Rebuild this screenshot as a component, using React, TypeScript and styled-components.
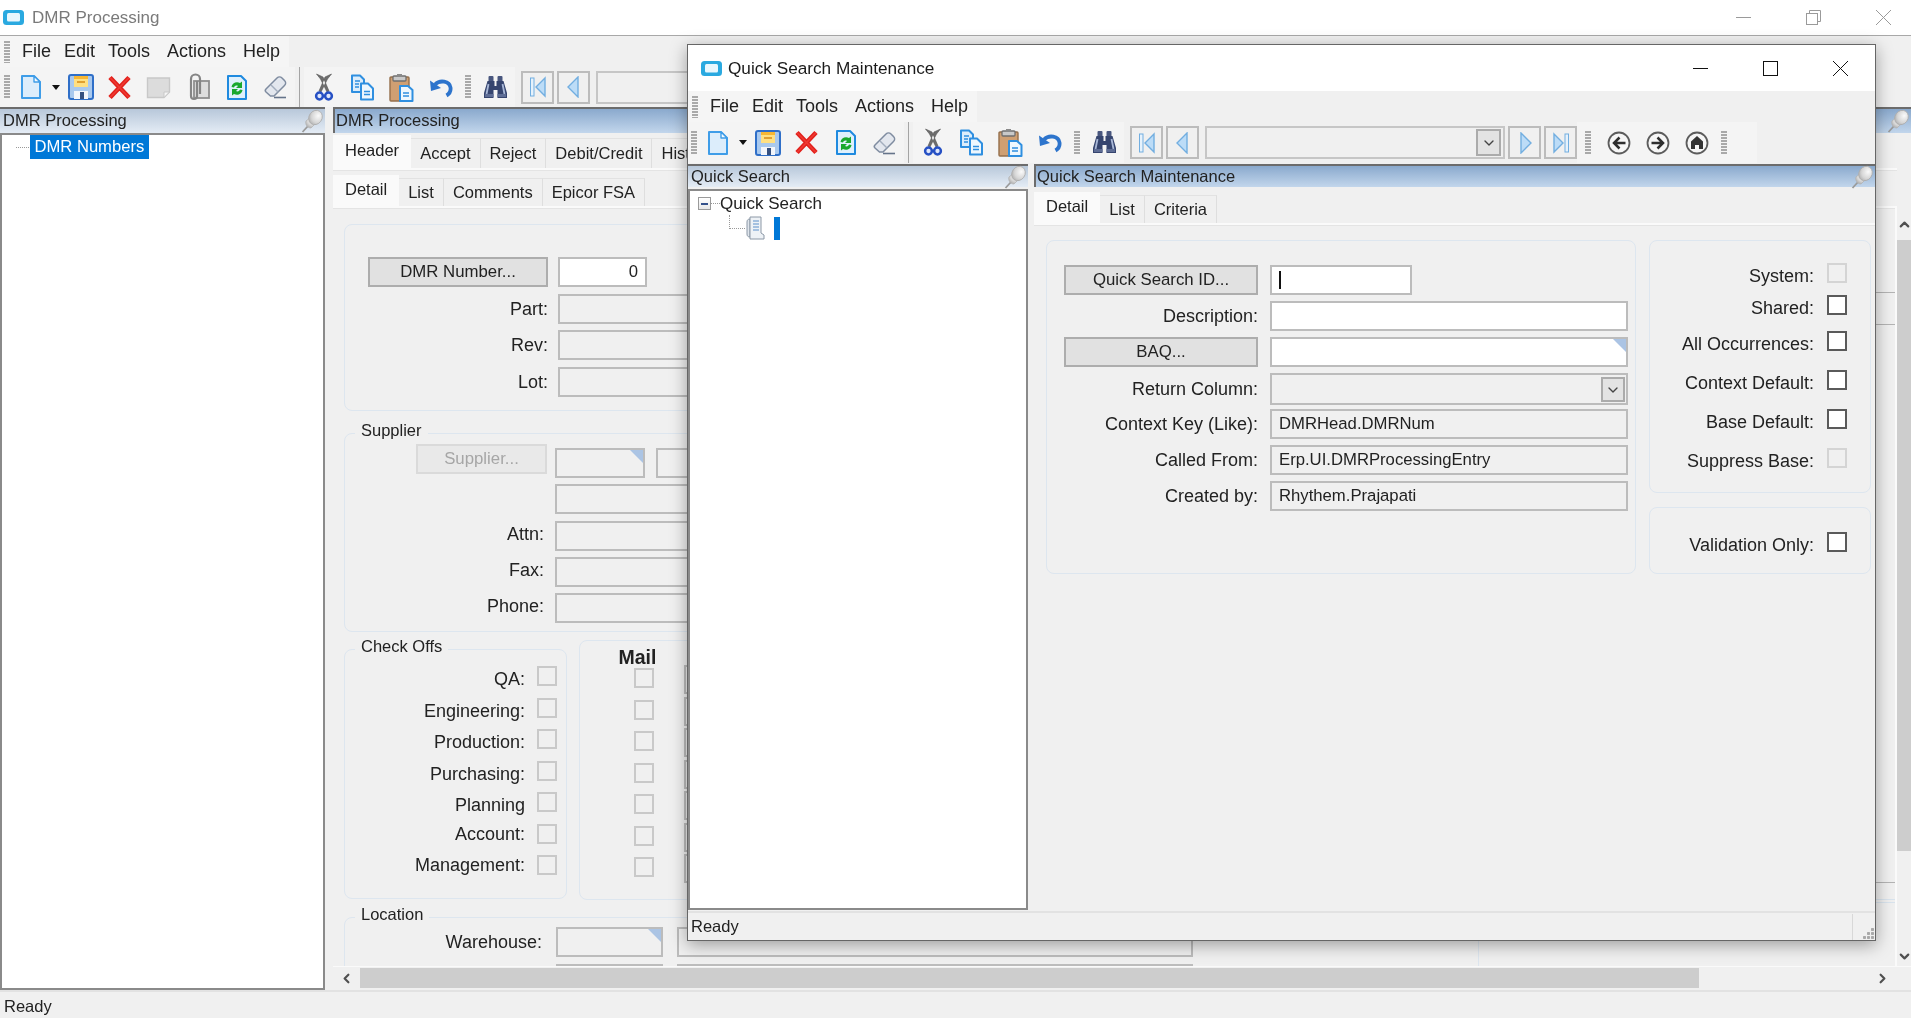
import React from 'react';
import styled, { createGlobalStyle } from 'styled-components';
import { ChevronDown, ChevronLeft, ChevronRight, ChevronUp } from 'lucide-react';

const GlobalStyle = createGlobalStyle`
  html, body {
    margin: 0;
    padding: 0;
    background: #f0f0f0;
    overflow: hidden;
  }
  * {
    box-sizing: border-box;
  }
  body {
    font-family: "Liberation Sans", Arial, sans-serif;
    color: #222;
  }
`;

/* ---------- drawings ---------- */

const AppIcon = () => (
  <svg width="21" height="15" viewBox="0 0 21 15">
    <rect x="0" y="0" width="21" height="15" rx="3.5" fill="#2aa9e0" />
    <rect x="4" y="3" width="13" height="8.5" rx="1.5" fill="#e9f7fd" />
  </svg>
);

const NewIcon = () => (
  <svg width="22" height="26" viewBox="0 0 22 26">
    <path d="M2 2h12l6 6v16H2z" fill="#dcedfb" stroke="#3f9de8" strokeWidth="2" strokeLinejoin="round" />
    <path d="M14 2v6h6z" fill="#f6fbff" stroke="#3f9de8" strokeWidth="1.400" strokeLinejoin="round" />
  </svg>
);

const SaveIcon = () => (
  <svg width="26" height="26" viewBox="0 0 26 26">
    <rect x="1" y="1" width="24" height="24" rx="2" fill="#a9c9ee" stroke="#2f6fc8" strokeWidth="2" />
    <rect x="6" y="2" width="14" height="11" fill="#ffe082" />
    <rect x="6" y="2" width="14" height="3" fill="#f7b733" />
    <rect x="9" y="7" width="8" height="2" fill="#e0a030" />
    <rect x="6" y="17" width="14" height="8" fill="#f3f6fb" />
    <rect x="12" y="18" width="4" height="7" fill="#35507f" />
  </svg>
);

const DeleteIcon = () => (
  <svg width="25" height="25" viewBox="0 0 25 25">
    <path d="M3 2.500l19 20M22 2.500l-19 20" stroke="#e2211c" strokeWidth="4.600" fill="none" />
    <path d="M3 2.500l19 20M22 2.500l-19 20" stroke="#ee3a33" strokeWidth="1.600" fill="none" />
  </svg>
);

const NoteIcon = () => (
  <svg width="25" height="23" viewBox="0 0 25 23">
    <path d="M1.500 2h22v14l-5.500 5.500H1.500z" fill="#dcdcdc" stroke="#c8c8c8" strokeWidth="1.400" />
    <path d="M23.500 16H18v5.500z" fill="#f6f6f6" stroke="#c8c8c8" />
  </svg>
);

const ClipIcon = () => (
  <svg width="25" height="28" viewBox="0 0 25 28">
    <rect x="9" y="8" width="15" height="17" fill="#dedede" stroke="#8f8f8f" strokeWidth="1.800" />
    <path d="M15 21V6a4.500 4.500 0 0 0-9 0v17a3 3 0 0 0 6 0V8" fill="none" stroke="#858585" strokeWidth="2.200" />
  </svg>
);

const RefreshIcon = () => (
  <svg width="22" height="27" viewBox="0 0 22 27">
    <path d="M2 2h13l5 5v18H2z" fill="#dff0fc" stroke="#1f8adf" strokeWidth="2" strokeLinejoin="round" />
    <path d="M5.500 13c.5-4 5-6 8.500-4l2-1.500V14h-6l2-2c-2-1-3.500 0-4 1.500z" fill="#19a82e" />
    <path d="M16.500 16c-.5 4-5 6-8.500 4l-2 1.500V15h6l-2 2c2 1 3.500 0 4-1.500z" fill="#19a82e" />
  </svg>
);

const EraserIcon = () => (
  <svg width="25" height="24" viewBox="0 0 25 24">
    <path d="M3 14L14 3c1.500-1.500 3.500-1.500 5 0l2.500 2.500c1.500 1.500 1.500 3.500 0 5L11 21H7.500L3 17c-1-1-1-2 0-3z" fill="#e3e7ee" stroke="#7f8ca0" strokeWidth="1.500" />
    <path d="M8 10l7 7" stroke="#a3aebd" strokeWidth="1.400" />
    <path d="M11 22.500h12" stroke="#65748a" strokeWidth="1.600" />
  </svg>
);

const CutIcon = () => (
  <svg width="20" height="29" viewBox="0 0 20 29">
    <path d="M2.500 1l4 5L13 19l2-1L9 4zM17.500 1l-4 5L7 19l-2-1L11 4z" fill="#6d6d6d" stroke="#555" strokeWidth=".6" />
    <circle cx="5.500" cy="23" r="3.400" fill="#dfe7fb" stroke="#2650c4" strokeWidth="2.500" />
    <circle cx="14.500" cy="23" r="3.400" fill="#dfe7fb" stroke="#2650c4" strokeWidth="2.500" />
  </svg>
);

const CopyIcon = () => (
  <svg width="25" height="27" viewBox="0 0 25 27">
    <path d="M2 1.500h8l4 4V18H2z" fill="#dcedfb" stroke="#2f8fe0" strokeWidth="2" strokeLinejoin="round" />
    <path d="M11 9.500h7l5 5V25.500H11z" fill="#eef7fe" stroke="#2f8fe0" strokeWidth="2" strokeLinejoin="round" />
    <path d="M14 17.500h6M14 20.500h6M5 7h5M5 10h4M5 13h4" stroke="#2f8fe0" strokeWidth="1.400" />
  </svg>
);

const PasteIcon = () => (
  <svg width="25" height="29" viewBox="0 0 25 29">
    <rect x="1" y="4" width="19" height="24" rx="1" fill="#cf9f72" stroke="#946f4c" strokeWidth="1.400" />
    <rect x="4" y="3" width="13" height="5" rx="1" fill="#c9c9c9" stroke="#6f6f6f" strokeWidth="1.300" />
    <rect x="8" y="1" width="5" height="3" fill="#8a8a8a" />
    <path d="M11 13h8l4.500 4v11H11z" fill="#eef7fe" stroke="#2f8fe0" strokeWidth="2" strokeLinejoin="round" />
    <path d="M14 20h6M14 23h6" stroke="#2f8fe0" strokeWidth="1.400" />
  </svg>
);

const UndoIcon = () => (
  <svg width="24" height="21" viewBox="0 0 24 21">
    <path d="M6 7.500c5-5 14.500-3.500 15.500 3 .5 3.500-1.500 6.500-4 8" fill="none" stroke="#2d74cc" strokeWidth="3.800" />
    <path d="M1 3.500l1 10.500 10-3z" fill="#2d74cc" />
  </svg>
);

const BinocularsIcon = () => (
  <svg width="25" height="25" viewBox="0 0 25 25">
    <rect x="5.500" y="1" width="5" height="6" rx="1" fill="#48567e" />
    <rect x="14.500" y="1" width="5" height="6" rx="1" fill="#48567e" />
    <path d="M4.500 6h7v5h2V6h7l3.500 12v5h-9.500v-8h-4v8H1v-5z" fill="#36456f" />
    <path d="M5.500 9L3.500 19M19.500 9l2 10" stroke="#a9b8d8" strokeWidth="1.800" />
    <rect x="2" y="19" width="8.500" height="3" fill="#5e6d95" />
    <rect x="14.500" y="19" width="8.500" height="3" fill="#5e6d95" />
  </svg>
);

const TriIcon = ({ dir, bar }: { dir: 'left' | 'right'; bar?: boolean }) => (
  <svg width="20" height="22" viewBox="0 0 20 22">
    <g transform={dir === 'left' ? 'translate(20,0) scale(-1,1)' : undefined}>
      <path d={bar ? 'M3 2l9 9-9 9z' : 'M6 1l10 10-10 10z'} fill="#bcdcf7" stroke="#72aee0" strokeWidth="1.400" />
      {bar && <rect x="14" y="2" width="3.500" height="18" fill="#e6f2fc" stroke="#72aee0" />}
    </g>
  </svg>
);

const CircleArrowIcon = ({ dir }: { dir: 'left' | 'right' }) => (
  <svg width="24" height="24" viewBox="0 0 24 24">
    <circle cx="12" cy="12" r="10.500" fill="#f6f6f6" stroke="#5c5c5c" strokeWidth="1.800" />
    <g transform={dir === 'left' ? 'translate(24,0) scale(-1,1)' : undefined}>
      <path d="M5.500 12h10M11.500 6.500l5.500 5.500-5.500 5.500" fill="none" stroke="#2e2e2e" strokeWidth="2.500" />
    </g>
  </svg>
);

const HomeIcon = () => (
  <svg width="24" height="24" viewBox="0 0 24 24">
    <circle cx="12" cy="12" r="10.500" fill="#f6f6f6" stroke="#5c5c5c" strokeWidth="1.800" />
    <path d="M12 5l6 5.500V18h-4v-4h-4v4H6v-7.500z" fill="#333" />
  </svg>
);

const PinIcon = () => (
  <svg width="23" height="24" viewBox="0 0 23 24">
    <defs>
      <radialGradient id="pinHead" cx="0.6" cy="0.3" r="0.8">
        <stop offset="0" stopColor="#fafafa" />
        <stop offset="0.6" stopColor="#d6d6d6" />
        <stop offset="1" stopColor="#a6a6a6" />
      </radialGradient>
    </defs>
    <path d="M7 17L1.500 23" stroke="#9a9a9a" strokeWidth="1.800" />
    <path d="M5 12c-1 3 1 7 5 7l6-6-5-6z" fill="url(#pinHead)" stroke="#b4b4b4" strokeWidth=".8" />
    <ellipse cx="14.500" cy="8.500" rx="6.500" ry="7.500" transform="rotate(35 14.500 8.500)" fill="url(#pinHead)" stroke="#adadad" strokeWidth=".8" />
  </svg>
);

const BookIcon = () => (
  <svg width="21" height="24" viewBox="0 0 21 24">
    <path d="M2 6c0-2 1-3 3-3v18c-2 0-3-1-3-3z" fill="#dfe5ec" stroke="#8c98a6" />
    <path d="M5 1h11v16l3 2v4H5z" fill="#eef2f6" stroke="#8c98a6" />
    <path d="M8 5h6M8 8h6M8 11h6M8 14h6" stroke="#5d8fc9" strokeWidth="1.200" />
  </svg>
);

const MinLine = () => (
  <svg width="15" height="15" viewBox="0 0 15 15">
    <path d="M0 7.500h15" stroke="currentColor" strokeWidth="1" />
  </svg>
);
const MaxBox = () => (
  <svg width="15" height="15" viewBox="0 0 15 15">
    <rect x="0.500" y="0.500" width="14" height="14" fill="none" stroke="currentColor" />
  </svg>
);
const RestoreBox = () => (
  <svg width="15" height="15" viewBox="0 0 15 15">
    <rect x="0.500" y="3.500" width="11" height="11" fill="none" stroke="currentColor" />
    <path d="M3.500 3.500v-3h11v11h-3" fill="none" stroke="currentColor" />
  </svg>
);
const CloseX = () => (
  <svg width="15" height="15" viewBox="0 0 15 15">
    <path d="M0 0l15 15M15 0L0 15" stroke="currentColor" strokeWidth="1" />
  </svg>
);

/* ---------- window chrome ---------- */

const Page = styled.div`
  width: 1911px;
  height: 1018px;
  position: relative;
  overflow: hidden;
  display: flex;
  flex-direction: column;
  background: #f0f0f0;
  filter: blur(0.3px);
`;

const TitleBar = styled.div<{ $h: number; $dim?: boolean }>`
  height: ${(p) => p.$h}px;
  flex: none;
  display: flex;
  align-items: center;
  background: #fff;
  padding-left: ${(p) => (p.$dim ? 3 : 13)}px;
  color: ${(p) => (p.$dim ? '#7a7a7a' : '#1a1a1a')};
  border-bottom: ${(p) => (p.$dim ? '1px solid #a8a8a8' : 'none')};
`;

const TitleText = styled.span<{ $dim?: boolean }>`
  font-size: ${(p) => (p.$dim ? 17 : 17.2)}px;
  margin-left: ${(p) => (p.$dim ? 8 : 6)}px;
`;

const WinControls = styled.div<{ $dim?: boolean }>`
  margin-left: auto;
  display: flex;
  color: ${(p) => (p.$dim ? '#9a9a9a' : '#111')};
  margin-right: ${(p) => (p.$dim ? -7 : 0)}px;
`;

const WinButton = styled.div`
  width: 70px;
  display: flex;
  justify-content: center;
  align-items: center;
`;

const MenuBar = styled.div`
  height: 31px;
  flex: none;
  display: flex;
  background: #f0f0f0;
`;

const MenuInner = styled.div`
  width: 289px;
  display: flex;
  align-items: center;
  background: #f5f5f5;
  padding-left: 4px;
`;

const Grip = styled.div<{ $h?: number }>`
  width: 6px;
  height: ${(p) => p.$h ?? 24}px;
  flex: none;
  background: repeating-linear-gradient(#a9a9a9 0 2px, transparent 2px 3px);
`;

const MenuItem = styled.span<{ $mr: number }>`
  font-size: 18px;
  margin-right: ${(p) => p.$mr}px;
  &:first-of-type {
    margin-left: 12px;
  }
`;

const ToolBar = styled.div<{ $h: number }>`
  height: ${(p) => p.$h}px;
  flex: none;
  display: flex;
  align-items: center;
  overflow: hidden;
`;

const Band = styled.div<{ $pad?: number }>`
  height: 100%;
  flex: none;
  display: flex;
  align-items: center;
  background: #f4f4f4;
  padding-left: ${(p) => p.$pad ?? 0}px;
`;

const ToolSlot = styled.div<{ $w?: number }>`
  width: ${(p) => p.$w ?? 39}px;
  height: 100%;
  flex: none;
  display: flex;
  align-items: center;
  justify-content: center;
`;

const ToolSep = styled.div`
  width: 1px;
  height: 100%;
  flex: none;
  background: #a4a4a4;
  margin: 0 4px;
`;

const DropArrow = styled.span`
  width: 0;
  height: 0;
  border-left: 4px solid transparent;
  border-right: 4px solid transparent;
  border-top: 5px solid #111;
`;

const NavButton = styled.div<{ $ml?: number }>`
  width: 33px;
  height: 33px;
  flex: none;
  margin-left: ${(p) => p.$ml ?? 3}px;
  border: 2px solid #bcbcbc;
  display: flex;
  align-items: center;
  justify-content: center;
`;

const NavCombo = styled.div`
  width: 300px;
  height: 33px;
  flex: none;
  margin-left: 6px;
  border: 2px solid #c6c6c6;
  display: flex;
  align-items: center;
  justify-content: flex-end;
  padding-right: 2px;
`;

const DropButton = styled.div`
  width: 25px;
  height: 27px;
  background: #e3e3e3;
  border: 2px solid #ababab;
  color: #444;
  display: flex;
  align-items: center;
  justify-content: center;
`;

const StatusBar = styled.div<{ $h: number; $pad: number; $low?: boolean }>`
  height: ${(p) => p.$h}px;
  flex: none;
  display: flex;
  align-items: center;
  font-size: 16.5px;
  padding-left: ${(p) => p.$pad}px;
  padding-top: ${(p) => (p.$low ? 2 : 0)}px;
  border-top: 2px solid #e2e2e2;
  background: #f0f0f0;
`;

const StatusSep = styled.div`
  width: 1px;
  height: 26px;
  background: #d8d8d8;
  margin-left: auto;
`;

const ResizeGrip = styled.div`
  width: 22px;
  height: 100%;
  align-self: flex-end;
  background: radial-gradient(circle at 1.500px 1.500px, #a9a9a9 1.400px, transparent 1.500px) right bottom / 4px 4px no-repeat,
    radial-gradient(circle at 1.500px 1.500px, #a9a9a9 1.400px, transparent 1.500px) right 4px bottom / 4px 4px no-repeat,
    radial-gradient(circle at 1.500px 1.500px, #a9a9a9 1.400px, transparent 1.500px) right 8px bottom / 4px 4px no-repeat,
    radial-gradient(circle at 1.500px 1.500px, #a9a9a9 1.400px, transparent 1.500px) right bottom 4px / 4px 4px no-repeat,
    radial-gradient(circle at 1.500px 1.500px, #a9a9a9 1.400px, transparent 1.500px) right 4px bottom 4px / 4px 4px no-repeat,
    radial-gradient(circle at 1.500px 1.500px, #a9a9a9 1.400px, transparent 1.500px) right bottom 8px / 4px 4px no-repeat;
`;

/* ---------- panels and tabs ---------- */

const PanelHeader = styled.div<{ $active?: boolean; $h: number }>`
  height: ${(p) => p.$h}px;
  flex: none;
  display: flex;
  align-items: center;
  justify-content: space-between;
  padding: 0 1px 0 ${(p) => (p.$active ? 1 : 3)}px;
  font-size: 16.5px;
  line-height: 20px;
  white-space: nowrap;
  border-top: 2px solid #6c6c6c;
  border-left: ${(p) => (p.$active ? '2px solid #6c6c6c' : 'none')};
  background: ${(p) =>
    p.$active ? 'linear-gradient(#8aa9cd, #c2d6ec)' : 'linear-gradient(#b8c8da, #e4ecf5)'};
`;

const HeaderText = styled.span`
  margin-top: -2px;
`;

const TreeBox = styled.div`
  flex: 1;
  background: #fff;
  border: 2px solid #8a8a8a;
`;

const TreeRow = styled.div<{ $pl: number; $h: number }>`
  height: ${(p) => p.$h}px;
  display: flex;
  align-items: center;
  padding-left: ${(p) => p.$pl}px;
  font-size: 17px;
`;

const Dots = styled.span<{ $w: number }>`
  width: ${(p) => p.$w}px;
  border-top: 1px dotted #999;
`;

const TreeSelection = styled.span`
  background: #0078d7;
  color: #fff;
  font-size: 16.6px;
  padding: 0 4.500px;
  height: 24px;
  line-height: 23px;
  margin-left: 1px;
`;

const Expander = styled.span`
  width: 13px;
  height: 13px;
  border: 1.500px solid #9a9a9a;
  background: linear-gradient(#fff, #e6e6e6);
  display: flex;
  align-items: center;
  justify-content: center;
  &::before {
    content: '';
    width: 7px;
    height: 2px;
    background: #33508a;
  }
`;

const Elbow = styled.span`
  width: 16px;
  height: 14px;
  margin-top: -12px;
  border-left: 1px dotted #999;
  border-bottom: 1px dotted #999;
`;

const BlueSliver = styled.span`
  width: 6px;
  height: 23px;
  background: #0078d7;
  margin-left: 8px;
`;

const TabRow = styled.div<{ $mt: number; $h: number }>`
  height: ${(p) => p.$h}px;
  margin-top: ${(p) => p.$mt}px;
  flex: none;
  display: flex;
  align-items: flex-end;
  border-bottom: 2px solid #fafafa;
  box-shadow: 0 1px 0 #e4e4e4;
`;

const Tab = styled.div<{ $active?: boolean; $h: number }>`
  height: ${(p) => (p.$active ? p.$h : p.$h - 5)}px;
  padding: 0 ${(p) => (p.$active ? 12 : 9)}px ${(p) => (p.$active ? 4 : 0)}px;
  display: flex;
  align-items: center;
  font-size: 16.5px;
  white-space: nowrap;
  flex: none;
  background: ${(p) => (p.$active ? '#fafafa' : '#f0f0f0')};
  border-top: ${(p) => (p.$active ? 'none' : '1px solid #e2e2e2')};
  border-right: ${(p) => (p.$active ? 'none' : '1px solid #dedede')};
  position: relative;
  margin-bottom: ${(p) => (p.$active ? -2 : 0)}px;
`;

/* ---------- forms ---------- */

const Group = styled.div<{ $w?: number; $h?: number; $mt?: number }>`
  position: relative;
  flex: none;
  width: ${(p) => (p.$w ? `${p.$w}px` : 'auto')};
  height: ${(p) => (p.$h ? `${p.$h}px` : 'auto')};
  margin-top: ${(p) => p.$mt ?? 0}px;
  border: 1.500px solid #dde6ef;
  border-radius: 8px;
`;

const Legend = styled.span`
  position: absolute;
  left: 10px;
  top: -14px;
  padding: 0 6px;
  background: #f0f0f0;
  font-size: 16.5px;
  line-height: 20px;
`;

const FormGrid = styled.div<{ $cols: string; $gap: number; $rowH: number; $pt: number; $pl: number }>`
  display: grid;
  grid-template-columns: ${(p) => p.$cols};
  column-gap: ${(p) => p.$gap}px;
  grid-auto-rows: ${(p) => p.$rowH}px;
  padding: ${(p) => p.$pt}px 0 0 ${(p) => p.$pl}px;
  align-items: start;
`;

const Label = styled.div<{ $h?: number }>`
  font-size: 18px;
  text-align: right;
  white-space: nowrap;
  line-height: ${(p) => p.$h ?? 30}px;
`;

const Button = styled.div<{ $off?: boolean; $w?: number; $mt?: number; $mr?: number }>`
  height: 30px;
  width: ${(p) => (p.$w ? `${p.$w}px` : 'auto')};
  margin-top: ${(p) => p.$mt ?? 0}px;
  margin-left: ${(p) => (p.$w ? 'auto' : 0)};
  margin-right: ${(p) => p.$mr ?? 0}px;
  display: flex;
  align-items: center;
  justify-content: center;
  font-size: 16.8px;
  white-space: nowrap;
  background: ${(p) => (p.$off ? '#e9e9e9' : '#e1e1e1')};
  border: 2px solid ${(p) => (p.$off ? '#dadada' : '#adadad')};
  color: ${(p) => (p.$off ? '#a6a6a6' : '#222')};
`;

const Field = styled.div<{ $white?: boolean; $corner?: boolean; $w?: number; $h?: number; $end?: boolean }>`
  position: relative;
  height: ${(p) => p.$h ?? 30}px;
  width: ${(p) => (p.$w ? `${p.$w}px` : 'auto')};
  display: flex;
  align-items: center;
  justify-content: ${(p) => (p.$end ? 'flex-end' : 'flex-start')};
  padding: 0 7px;
  font-size: 16.700px;
  white-space: nowrap;
  overflow: hidden;
  border: 2px solid #bcbcbc;
  background: ${(p) => (p.$white ? '#fff' : 'transparent')};
  &::after {
    content: ${(p) => (p.$corner ? "''" : 'none')};
    position: absolute;
    top: 0;
    right: 0;
    width: 13px;
    height: 13px;
    background: #abc4e4;
    clip-path: polygon(0 0, 100% 0, 100% 100%);
  }
`;

const FieldPair = styled.div`
  display: flex;
  column-gap: 11px;
`;

const Caret = styled.span`
  width: 1.500px;
  height: 18px;
  background: #111;
`;

const FieldDrop = styled(DropButton)`
  position: absolute;
  right: 1px;
  top: 2px;
  width: 24px;
  height: 25px;
`;

const CheckBox = styled.span<{ $tone?: 'dark' | 'faint' | 'soft' }>`
  display: block;
  width: 20px;
  height: 20px;
  flex: none;
  border: 2px solid
    ${(p) => (p.$tone === 'dark' ? '#5a5a5a' : p.$tone === 'soft' ? '#c9c9c9' : '#d4d4d4')};
  background: ${(p) => (p.$tone === 'dark' ? '#fff' : 'transparent')};
`;

const CheckRow = styled.div<{ $mt?: number }>`
  display: flex;
  align-items: center;
  justify-content: flex-end;
  height: 20px;
  padding-right: 23px;
  margin-top: ${(p) => p.$mt ?? 0}px;
`;

const CheckLabel = styled.span`
  font-size: 18px;
  white-space: nowrap;
  margin: 6px 13px 0 0;
  line-height: 20px;
`;

/* ---------- main window body ---------- */

const Workspace = styled.div`
  flex: 1;
  min-height: 0;
  display: flex;
  column-gap: 8px;
`;

const LeftPanel = styled.div`
  width: 325px;
  flex: none;
  display: flex;
  flex-direction: column;
`;

const RightPanel = styled.div`
  flex: 1;
  min-width: 0;
  display: flex;
  flex-direction: column;
`;

const RightBody = styled.div`
  flex: 1;
  min-height: 0;
  display: flex;
`;

const TabArea = styled.div`
  flex: 1;
  min-width: 0;
  display: flex;
  flex-direction: column;
`;

const Viewport = styled.div`
  flex: 1;
  min-height: 0;
  overflow: hidden;
  display: flex;
  border-right: 2px solid #fafafa;
`;

const FormColumn = styled.div`
  width: 1542px;
  flex: none;
  padding: 16px 0 0 11px;
  display: flex;
  flex-direction: column;
`;

const CheckGrid = styled.div`
  display: grid;
  grid-template-columns: 180px 20px;
  column-gap: 12px;
  grid-auto-rows: 31.500px;
  padding-top: 16px;
`;

const CheckName = styled.div<{ $mt: number }>`
  font-size: 18px;
  text-align: right;
  white-space: nowrap;
  line-height: 20px;
  margin-top: ${(p) => p.$mt}px;
`;

const TwinRow = styled.div`
  display: flex;
  column-gap: 12px;
  margin-top: 8px;
  align-items: flex-start;
`;

const MailTitle = styled.div`
  width: 115px;
  text-align: center;
  font-size: 19.500px;
  font-weight: 700;
  line-height: 20px;
  padding: 6px 0 0 0;
  height: 26px;
`;

const MailGrid = styled.div`
  display: grid;
  grid-template-columns: 20px 300px;
  column-gap: 30px;
  grid-auto-rows: 31.500px;
  padding: 1px 0 0 54px;
`;

const StubField = styled.div`
  height: 29px;
  margin-top: -3px;
  border: 2px solid #bcbcbc;
`;

const Rail = styled.div`
  width: 20px;
  flex: none;
  display: flex;
  flex-direction: column;
`;

const RailLine = styled.div<{ $mt: number; $blue?: boolean }>`
  height: ${(p) => (p.$blue ? 4 : 1)}px;
  flex: none;
  margin-top: ${(p) => p.$mt}px;
  background: ${(p) => (p.$blue ? 'transparent' : '#b4b4b4')};
  border-top: ${(p) => (p.$blue ? '1px solid #d9e4ee' : 'none')};
  border-bottom: ${(p) => (p.$blue ? '1px solid #d9e4ee' : 'none')};
`;

const VScroll = styled.div`
  width: 14px;
  flex: none;
  margin-top: 84px;
  display: flex;
  flex-direction: column;
  align-items: center;
  color: #505050;
`;

const VThumb = styled.div`
  width: 100%;
  height: 611px;
  background: #cdcdcd;
  margin: 6px 0 auto;
`;

const VArrow = styled.div`
  height: 15px;
  display: flex;
  align-items: center;
  margin-bottom: 2px;
`;

const HScroll = styled.div`
  height: 24px;
  flex: none;
  display: flex;
  align-items: center;
  color: #505050;
  padding: 1px 21px 2px 0;
  border-top: 1px solid #fafafa;
`;

const HArrow = styled.div`
  width: 27px;
  display: flex;
  justify-content: center;
  flex: none;
`;

const HThumb = styled.div`
  width: 1339px;
  height: 100%;
  background: #cdcdcd;
  flex: none;
  margin-right: auto;
`;

/* ---------- dialog ---------- */

const Dialog = styled.div`
  position: absolute;
  left: 687px;
  top: 44px;
  width: 1189px;
  height: 897px;
  display: flex;
  flex-direction: column;
  background: #f0f0f0;
  border: 1px solid #666;
  box-shadow: 0 4px 16px rgba(0, 0, 0, 0.35);
`;

const DialogBody = styled.div`
  flex: 1;
  min-height: 0;
  display: flex;
  column-gap: 6px;
  padding-top: 1px;
`;

const TreePane = styled.div`
  width: 340px;
  flex: none;
  display: flex;
  flex-direction: column;
  row-gap: 2px;
  margin-bottom: 1px;
`;

const DetailPane = styled.div`
  flex: 1;
  min-width: 0;
  display: flex;
  flex-direction: column;
`;

const DetailForms = styled.div`
  display: flex;
  column-gap: 13px;
  padding: 15px 0 0 12px;
`;

const SideColumn = styled.div`
  width: 222px;
  flex: none;
  display: flex;
  flex-direction: column;
`;

/* ---------- data ---------- */

const menus = [
  { name: 'File', gap: 13 },
  { name: 'Edit', gap: 13 },
  { name: 'Tools', gap: 17 },
  { name: 'Actions', gap: 17 },
  { name: 'Help', gap: 0 },
];
const checkOffs = ['QA:', 'Engineering:', 'Production:', 'Purchasing:', 'Planning', 'Account:', 'Management:'];

function Menu() {
  return (
    <MenuBar>
      <MenuInner>
        <Grip $h={22} />
        {menus.map((m) => (
          <MenuItem key={m.name} $mr={m.gap}>
            {m.name}
          </MenuItem>
        ))}
      </MenuInner>
    </MenuBar>
  );
}

function Tools({ h, full, dialog }: { h: number; full?: boolean; dialog?: boolean }) {
  return (
    <ToolBar $h={h}>
      <Band $pad={dialog ? 3 : 4}>
        <Grip />
        <ToolSlot $w={41}>
          <NewIcon />
        </ToolSlot>
        <ToolSlot $w={10}>
          <DropArrow />
        </ToolSlot>
        <ToolSlot>
          <SaveIcon />
        </ToolSlot>
        <ToolSlot>
          <DeleteIcon />
        </ToolSlot>
        {full && (
          <>
            <ToolSlot>
              <NoteIcon />
            </ToolSlot>
            <ToolSlot>
              <ClipIcon />
            </ToolSlot>
          </>
        )}
        <ToolSlot>
          <RefreshIcon />
        </ToolSlot>
        <ToolSlot>
          <EraserIcon />
        </ToolSlot>
      </Band>
      <ToolSep />
      <Band>
        <ToolSlot>
          <CutIcon />
        </ToolSlot>
        <ToolSlot>
          <CopyIcon />
        </ToolSlot>
        <ToolSlot>
          <PasteIcon />
        </ToolSlot>
        <ToolSlot>
          <UndoIcon />
        </ToolSlot>
        <ToolSlot $w={16}>
          <Grip />
        </ToolSlot>
        <ToolSlot>
          <BinocularsIcon />
        </ToolSlot>
      </Band>
      <NavButton $ml={6}>
        <TriIcon dir="left" bar />
      </NavButton>
      <NavButton>
        <TriIcon dir="left" />
      </NavButton>
      <NavCombo>
        {dialog && (
          <DropButton>
            <ChevronDown size={16} />
          </DropButton>
        )}
      </NavCombo>
      {dialog && (
        <>
          <NavButton>
            <TriIcon dir="right" />
          </NavButton>
          <NavButton>
            <TriIcon dir="right" bar />
          </NavButton>
          <Band $pad={8}>
            <Grip />
            <ToolSlot $w={8} />
            <ToolSlot>
              <CircleArrowIcon dir="left" />
            </ToolSlot>
            <ToolSlot>
              <CircleArrowIcon dir="right" />
            </ToolSlot>
            <ToolSlot>
              <HomeIcon />
            </ToolSlot>
            <ToolSlot $w={16}>
              <Grip />
            </ToolSlot>
            <ToolSlot $w={25} />
          </Band>
        </>
      )}
    </ToolBar>
  );
}

function Tabs({ names, h, mt }: { names: string[]; h: number; mt: number }) {
  return (
    <TabRow $h={h} $mt={mt}>
      {names.map((n, i) => (
        <Tab key={n} $active={i === 0} $h={h}>
          {n}
        </Tab>
      ))}
    </TabRow>
  );
}

function DmrForms() {
  return (
    <FormColumn>
      <Group $w={1135} $h={187}>
        <FormGrid $cols="180px 443px" $gap={10} $rowH={36.5} $pt={32} $pl={23}>
          <Button>DMR Number...</Button>
          <Field $white $end $w={89}>
            0
          </Field>
          <Label>Part:</Label>
          <Field />
          <Label>Rev:</Label>
          <Field />
          <Label>Lot:</Label>
          <Field />
        </FormGrid>
      </Group>
      <Group $w={1135} $h={199} $mt={22}>
        <Legend>Supplier</Legend>
        <FormGrid $cols="199px 500px" $gap={11} $rowH={36.25} $pt={14} $pl={0}>
          <Button $off $w={131} $mt={-4} $mr={-3}>
            Supplier...
          </Button>
          <FieldPair>
            <Field $corner $w={90} />
            <Field $w={300} />
          </FieldPair>
          <span />
          <Field />
          <Label $h={26}>Attn:</Label>
          <Field />
          <Label $h={26}>Fax:</Label>
          <Field />
          <Label $h={26}>Phone:</Label>
          <Field />
        </FormGrid>
      </Group>
      <TwinRow>
        <Group $w={223} $h={250} $mt={9}>
          <Legend>Check Offs</Legend>
          <CheckGrid>
            {checkOffs.map((c, i) => (
              <React.Fragment key={c}>
                <CheckName $mt={i < 5 ? 3 : 0}>{c}</CheckName>
                <CheckBox $tone="soft" />
              </React.Fragment>
            ))}
          </CheckGrid>
        </Group>
        <Group $w={700} $h={260}>
          <MailTitle>Mail</MailTitle>
          <MailGrid>
            {checkOffs.map((c) => (
              <React.Fragment key={c}>
                <CheckBox $tone="soft" />
                <StubField />
              </React.Fragment>
            ))}
          </MailGrid>
        </Group>
      </TwinRow>
      <Group $w={1135} $h={120} $mt={17}>
        <Legend>Location</Legend>
        <FormGrid $cols="197px 107px 516px" $gap={14} $rowH={37} $pt={9} $pl={0}>
          <Label>Warehouse:</Label>
          <Field $corner />
          <Field />
          <span />
          <Field $corner />
          <Field />
        </FormGrid>
      </Group>
    </FormColumn>
  );
}

function QuickSearchDialog() {
  return (
    <Dialog>
      <TitleBar $h={46}>
        <AppIcon />
        <TitleText>Quick Search Maintenance</TitleText>
        <WinControls>
          <WinButton>
            <MinLine />
          </WinButton>
          <WinButton>
            <MaxBox />
          </WinButton>
          <WinButton>
            <CloseX />
          </WinButton>
        </WinControls>
      </TitleBar>
      <Menu />
      <Tools h={41} dialog />
      <DialogBody>
        <TreePane>
          <PanelHeader $h={23}>
            <HeaderText>Quick Search</HeaderText>
            <PinIcon />
          </PanelHeader>
          <TreeBox>
            <TreeRow $pl={8} $h={25}>
              <Expander />
              <Dots $w={9} />
              <span>Quick Search</span>
            </TreeRow>
            <TreeRow $pl={39} $h={24}>
              <Elbow />
              <BookIcon />
              <BlueSliver />
            </TreeRow>
          </TreeBox>
        </TreePane>
        <DetailPane>
          <PanelHeader $active $h={23}>
            <HeaderText>Quick Search Maintenance</HeaderText>
            <PinIcon />
          </PanelHeader>
          <Tabs names={['Detail', 'List', 'Criteria']} h={33} mt={5} />
          <DetailForms>
            <Group $w={590} $h={334}>
              <FormGrid $cols="194px 358px" $gap={12} $rowH={36} $pt={24} $pl={17}>
                <Button>Quick Search ID...</Button>
                <Field $white $w={142}>
                  <Caret />
                </Field>
                <Label>Description:</Label>
                <Field $white />
                <Button>BAQ...</Button>
                <Field $white $corner />
                <Label $h={32}>Return Column:</Label>
                <Field $h={32}>
                  <FieldDrop>
                    <ChevronDown size={16} />
                  </FieldDrop>
                </Field>
                <Label>Context Key (Like):</Label>
                <Field>DMRHead.DMRNum</Field>
                <Label>Called From:</Label>
                <Field>Erp.UI.DMRProcessingEntry</Field>
                <Label>Created by:</Label>
                <Field>Rhythem.Prajapati</Field>
              </FormGrid>
            </Group>
            <SideColumn>
              <Group $h={253}>
                <CheckRow $mt={22}>
                  <CheckLabel>System:</CheckLabel>
                  <CheckBox $tone="faint" />
                </CheckRow>
                <CheckRow $mt={12}>
                  <CheckLabel>Shared:</CheckLabel>
                  <CheckBox $tone="dark" />
                </CheckRow>
                <CheckRow $mt={16}>
                  <CheckLabel>All Occurrences:</CheckLabel>
                  <CheckBox $tone="dark" />
                </CheckRow>
                <CheckRow $mt={19}>
                  <CheckLabel>Context Default:</CheckLabel>
                  <CheckBox $tone="dark" />
                </CheckRow>
                <CheckRow $mt={19}>
                  <CheckLabel>Base Default:</CheckLabel>
                  <CheckBox $tone="dark" />
                </CheckRow>
                <CheckRow $mt={19}>
                  <CheckLabel>Suppress Base:</CheckLabel>
                  <CheckBox $tone="faint" />
                </CheckRow>
              </Group>
              <Group $h={67} $mt={14}>
                <CheckRow $mt={24}>
                  <CheckLabel>Validation Only:</CheckLabel>
                  <CheckBox $tone="dark" />
                </CheckRow>
              </Group>
            </SideColumn>
          </DetailForms>
        </DetailPane>
      </DialogBody>
      <StatusBar $h={29} $pad={3}>
        Ready
        <StatusSep />
        <ResizeGrip />
      </StatusBar>
    </Dialog>
  );
}

export default function App() {
  return (
    <Page>
      <GlobalStyle />
      <TitleBar $h={36} $dim>
        <AppIcon />
        <TitleText $dim>DMR Processing</TitleText>
        <WinControls $dim>
          <WinButton>
            <MinLine />
          </WinButton>
          <WinButton>
            <RestoreBox />
          </WinButton>
          <WinButton>
            <CloseX />
          </WinButton>
        </WinControls>
      </TitleBar>
      <Menu />
      <Tools h={40} full />
      <Workspace>
        <LeftPanel>
          <PanelHeader $h={26}>
            <HeaderText>DMR Processing</HeaderText>
            <PinIcon />
          </PanelHeader>
          <TreeBox>
            <TreeRow $pl={14} $h={24}>
              <Dots $w={13} />
              <TreeSelection>DMR Numbers</TreeSelection>
            </TreeRow>
          </TreeBox>
        </LeftPanel>
        <RightPanel>
          <PanelHeader $active $h={26}>
            <HeaderText>DMR Processing</HeaderText>
            <PinIcon />
          </PanelHeader>
          <RightBody>
            <TabArea>
              <Tabs names={['Header', 'Accept', 'Reject', 'Debit/Credit', 'History']} h={35} mt={2} />
              <Tabs names={['Detail', 'List', 'Comments', 'Epicor FSA']} h={33} mt={5} />
              <Viewport>
                <DmrForms />
                <Rail>
                  <RailLine $mt={84} />
                  <RailLine $mt={31} />
                  <RailLine $mt={557} />
                  <RailLine $mt={16} $blue />
                </Rail>
              </Viewport>
            </TabArea>
            <VScroll>
              <VArrow>
                <ChevronUp size={15} strokeWidth={3.5} />
              </VArrow>
              <VThumb />
              <VArrow>
                <ChevronDown size={15} strokeWidth={3.5} />
              </VArrow>
            </VScroll>
          </RightBody>
          <HScroll>
            <HArrow>
              <ChevronLeft size={15} strokeWidth={3.5} />
            </HArrow>
            <HThumb />
            <ChevronRight size={15} strokeWidth={3.5} />
          </HScroll>
        </RightPanel>
      </Workspace>
      <StatusBar $h={28} $pad={4} $low>
        Ready
      </StatusBar>
      <QuickSearchDialog />
    </Page>
  );
}
